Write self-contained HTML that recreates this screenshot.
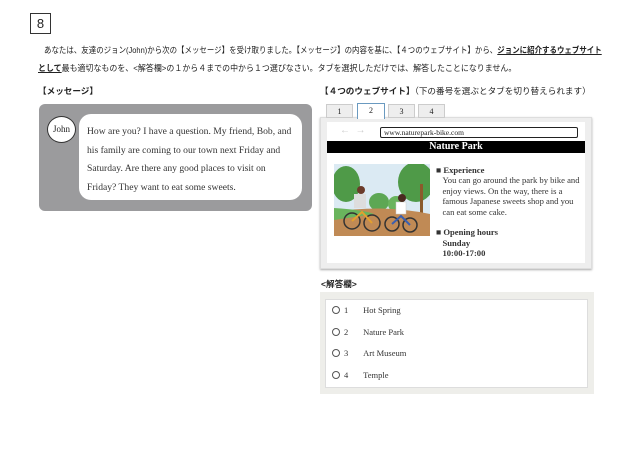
<!DOCTYPE html><html><head><meta charset="utf-8"><style>
*{margin:0;padding:0;box-sizing:border-box}
body{width:640px;height:453px;background:#fff;position:relative;overflow:hidden;font-family:"Liberation Sans","Noto Sans CJK JP",sans-serif;color:#222}
.a{position:absolute;white-space:nowrap}
.s{font-family:"Liberation Serif",serif}
.r{display:inline-block;width:8px;height:8px;border:1px solid #555;border-radius:50%;vertical-align:-1px;margin-right:4px}
</style></head><body>
<div class="a" style="left:30px;top:13px;width:21px;height:21px;border:1px solid #333;font-size:13px;text-align:center;line-height:19px">8</div>
<div class="a" style="left:44px;top:44px;font-size:8.6px;transform:scaleX(0.868);transform-origin:0 0">あなたは、友達のジョン(John)から次の【メッセージ】を受け取りました。【メッセージ】の内容を基に、【４つのウェブサイト】から、<u><b>ジョンに紹介するウェブサイト</b></u></div>
<div class="a" style="left:38px;top:62px;font-size:8.6px;transform:scaleX(0.926);transform-origin:0 0"><u><b>として</b></u>最も適切なものを、&lt;解答欄&gt;の１から４までの中から１つ選びなさい。タブを選択しただけでは、解答したことになりません。</div>
<div class="a" style="left:38px;top:85px;font-size:8.6px;font-weight:bold">【メッセージ】</div>
<div class="a" style="left:320px;top:85px;font-size:8.6px"><b>【４つのウェブサイト】</b>（下の番号を選ぶとタブを切り替えられます）</div>
<div class="a" style="left:39px;top:104px;width:273px;height:107px;background:#9b9b9d;border-radius:6px"></div>
<div class="a" style="left:79px;top:114px;width:223px;height:86px;background:#fff;border-radius:12px"></div>
<div class="a s" style="left:47px;top:116px;width:29px;height:27px;background:#fff;border:1.5px solid #333;border-radius:50%;font-size:9px;text-align:center;line-height:24px">John</div>
<div class="a s" style="left:87px;top:123px;font-size:9.6px;line-height:18.5px;color:#333">How are you? I have a question. My friend, Bob, and<br>his family are coming to our town next Friday and<br>Saturday. Are there any good places to visit on<br>Friday? They want to eat some sweets.</div>
<div class="a" style="left:320px;top:117px;width:272px;height:152px;background:#eee;border:1px solid #ddd;box-shadow:0 1px 2px #aaa"></div>
<div class="a s" style="left:326px;top:104px;width:27px;height:14px;background:#eee;border:1px solid #ccc;font-size:8px;text-align:center;line-height:13px">1</div>
<div class="a s" style="left:357px;top:103px;width:28px;height:16px;background:#fff;border:1px solid #6a9ac0;border-bottom:none;font-size:8px;text-align:center;line-height:14px">2</div>
<div class="a s" style="left:388px;top:104px;width:27px;height:14px;background:#eee;border:1px solid #ccc;font-size:8px;text-align:center;line-height:13px">3</div>
<div class="a s" style="left:418px;top:104px;width:27px;height:14px;background:#eee;border:1px solid #ccc;font-size:8px;text-align:center;line-height:13px">4</div>
<div class="a" style="left:327px;top:122px;width:258px;height:141px;background:#fff"></div>
<div class="a" style="left:340px;top:125px;font-size:10px;color:#ccc">←&nbsp;&nbsp;→</div>
<div class="a s" style="left:380px;top:127px;width:198px;height:11px;border:1.2px solid #222;border-radius:2px;font-size:7.5px;line-height:9px;padding-left:3px">www.naturepark-bike.com</div>
<div class="a s" style="left:327px;top:141px;width:258px;height:12px;background:#000;color:#fff;font-weight:bold;font-size:10px;text-align:center;line-height:12px">Nature Park</div>
<svg class="a" style="left:334px;top:164px" width="96" height="72" viewBox="0 0 96 72">
<rect width="96" height="72" fill="#dbeaf3"/>
<ellipse cx="12" cy="20" rx="14" ry="18" fill="#4f9a48"/><ellipse cx="82" cy="18" rx="18" ry="20" fill="#4f9a48"/>
<ellipse cx="45" cy="38" rx="10" ry="9" fill="#5da754"/><ellipse cx="62" cy="40" rx="8" ry="8" fill="#6ab45d"/>
<rect x="86" y="20" width="3" height="30" fill="#8b5a2b"/>
<path d="M0 48 Q48 40 96 50 L96 72 L0 72Z" fill="#c08a55"/>
<path d="M0 44 Q30 46 40 50 L0 56Z" fill="#6ab45d"/>
<circle cx="18" cy="57" r="8" fill="none" stroke="#333" stroke-width="1.5"/><circle cx="38" cy="59" r="8" fill="none" stroke="#333" stroke-width="1.5"/>
<path d="M18 57 L28 48 L38 59" stroke="#e3a02e" stroke-width="2" fill="none"/>
<rect x="20" y="30" width="12" height="14" fill="#ddd"/><circle cx="27" cy="26" r="4" fill="#6b3b2a"/>
<circle cx="58" cy="60" r="7" fill="none" stroke="#333" stroke-width="1.5"/><circle cx="76" cy="61" r="7" fill="none" stroke="#333" stroke-width="1.5"/>
<path d="M58 60 L67 52 L76 61" stroke="#3a5fb0" stroke-width="2" fill="none"/>
<rect x="62" y="38" width="10" height="12" fill="#fff" stroke="#ccc" stroke-width=".5"/><circle cx="68" cy="34" r="4" fill="#4a2a20"/>
</svg>
<div class="a s" style="left:436px;top:165px;font-size:8.6px;line-height:10.4px;color:#333"><b>■ Experience</b><br>&nbsp;&nbsp;&nbsp;You can go around the park by bike and<br>&nbsp;&nbsp;&nbsp;enjoy views. On the way, there is a<br>&nbsp;&nbsp;&nbsp;famous Japanese sweets shop and you<br>&nbsp;&nbsp;&nbsp;can eat some cake.<br><br><b>■ Opening hours<br>&nbsp;&nbsp;&nbsp;Sunday<br>&nbsp;&nbsp;&nbsp;10:00-17:00</b></div>
<div class="a" style="left:321px;top:278px;font-size:8.6px;font-weight:bold">&lt;解答欄&gt;</div>
<div class="a" style="left:320px;top:292px;width:274px;height:102px;background:#eeeeea"></div>
<div class="a" style="left:325px;top:299px;width:263px;height:89px;background:#fff;border:1px solid #ddd"></div>
<div class="a s" style="left:332px;top:300px;font-size:8.5px;line-height:21.5px;color:#333">
<span class="r"></span>1&nbsp;&nbsp;&nbsp;&nbsp;&nbsp;&nbsp;&nbsp;Hot Spring<br>
<span class="r"></span>2&nbsp;&nbsp;&nbsp;&nbsp;&nbsp;&nbsp;&nbsp;Nature Park<br>
<span class="r"></span>3&nbsp;&nbsp;&nbsp;&nbsp;&nbsp;&nbsp;&nbsp;Art Museum<br>
<span class="r"></span>4&nbsp;&nbsp;&nbsp;&nbsp;&nbsp;&nbsp;&nbsp;Temple</div>
</body></html>
